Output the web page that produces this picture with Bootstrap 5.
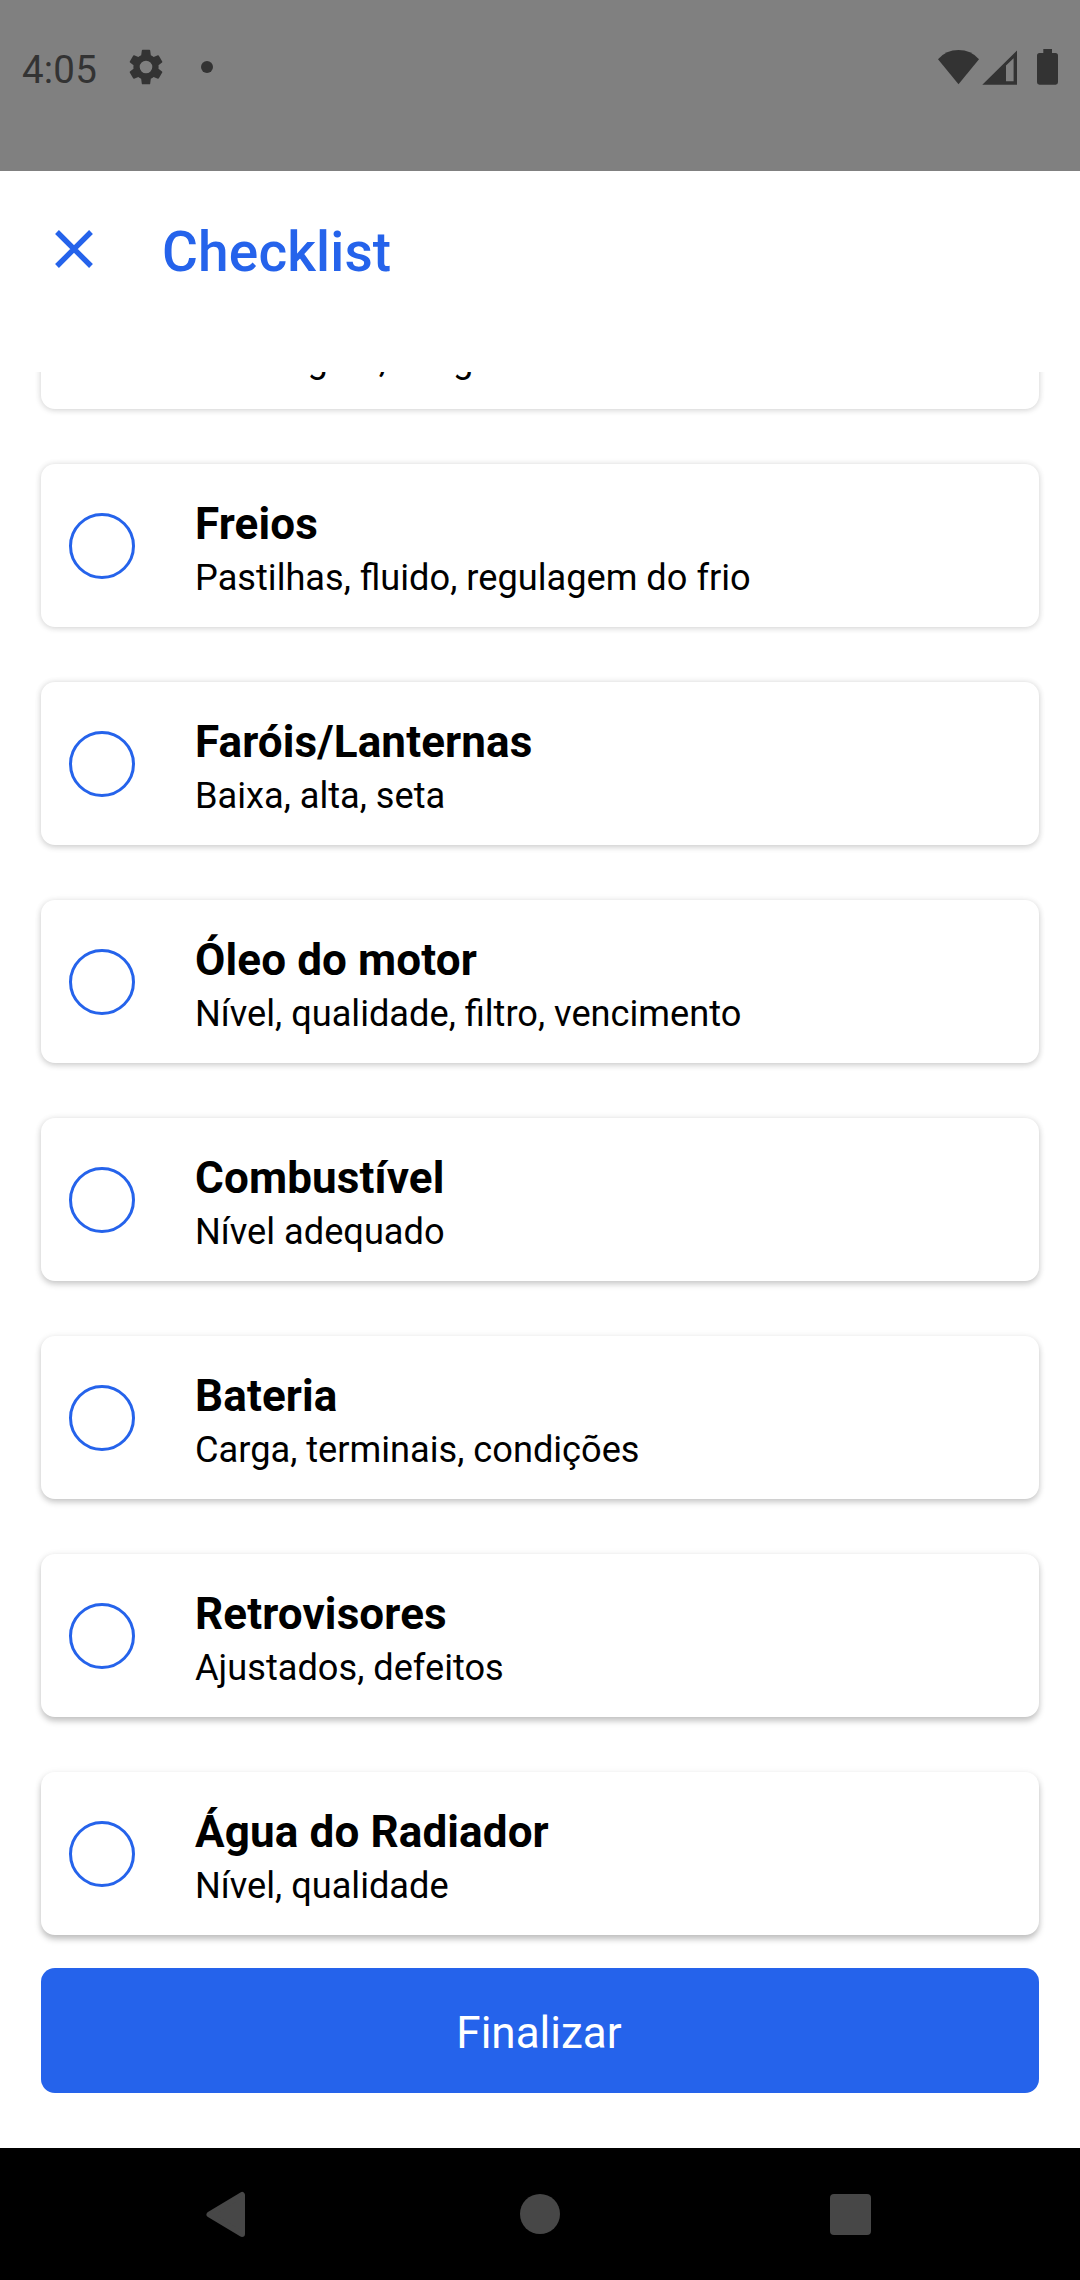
<!DOCTYPE html>
<html lang="pt-BR">
<head>
<meta charset="utf-8">
<meta name="viewport" content="width=device-width, initial-scale=1">
<title>Checklist</title>
<link href="https://cdn.jsdelivr.net/npm/bootstrap@5.3.0/dist/css/bootstrap.min.css" rel="stylesheet">
<style>
  :root { --brand: #2563eb; }
  body { font-family: Roboto, sans-serif; color: #000; background: #fff; }
  .screen { height: 2280px; width: 1080px; }
  .status-bar { height: 171px; background: #808080; color: #333; padding: 0 22px 0 22px; }
  .status-row { height: 134px; }
  .clock { font-size: 38.5px; line-height: 46px; width: 103px; padding-top: 5px; letter-spacing: .2px; }
  .sheet-head { height: 201px; padding: 49px 51px 0; color: var(--brand); }
  .btn-x { width: 46px; height: 58px; }
  .sheet-title { font-size: 55px; line-height: 64px; font-weight: 500; margin-left: 65px; letter-spacing: .15px; }
  .item-list { padding: 0 41px 33px; gap: 55px; }
  .item { height: 163px; border: 0; border-radius: 14px; padding: 0 28px; --lift: 1px; --tone: .17; color: #000;
          box-shadow: 0 var(--lift) 6px rgba(0,0,0,var(--tone)), 0 0 8px rgba(0,0,0,.04); }
  .item:nth-child(3) { --lift: 1.5px; --tone: .19; }
  .item:nth-child(4) { --lift: 2px; --tone: .2; }
  .item:nth-child(5) { --lift: 2.5px; --tone: .21; }
  .item:nth-child(6) { --lift: 3px; --tone: .22; }
  .item:nth-child(7) { --lift: 3.5px; --tone: .23; }
  .item:nth-child(8) { --lift: 4px; --tone: .25; }
  .item-scrolled { padding: 0 154px 28px; }
  .check { width: 66px; height: 66px; border: 3px solid var(--brand); background: none; margin: 0 60px 0 0; }
  .item-text { padding-top: 5px; }
  .item-name { font-size: 44px; line-height: 52px; font-weight: 700; margin: 0 0 7px; letter-spacing: .13px; }
  .item-note { font-size: 36.2px; line-height: 42px; margin: 0; }
  .btn-finish { height: 125px; margin: 0 41px 55px; border: 0; border-radius: 14px; padding: 4px 2px 0 0; font-size: 44px; line-height: 52px; color: #fff; background: var(--brand); }
  .nav-keys { height: 132px; background: #000; color: #474747; padding: 0 205px; }
</style>
</head>
<body>
<div class="screen d-flex flex-column overflow-hidden">
  <header class="status-bar flex-shrink-0">
    <div class="status-row d-flex align-items-center justify-content-between">
      <div class="d-flex align-items-center">
        <span class="clock">4:05</span>
        <svg width="42" height="42" viewBox="0 0 24 24" fill="currentColor"><path d="M19.14 12.94c.04-.3.06-.61.06-.94s-.02-.64-.07-.94l2.03-1.58a.49.49 0 0 0 .12-.61l-1.92-3.32a.49.49 0 0 0-.59-.22l-2.39.96a7 7 0 0 0-1.62-.94L14.4 2.5a.48.48 0 0 0-.48-.41h-3.84a.47.47 0 0 0-.47.41l-.36 2.85c-.59.24-1.13.57-1.62.94l-2.39-.96a.48.48 0 0 0-.59.22L2.74 8.87a.47.47 0 0 0 .12.61l2.03 1.58c-.05.3-.09.63-.09.94s.02.64.07.94l-2.03 1.58a.49.49 0 0 0-.12.61l1.92 3.32c.12.22.37.29.59.22l2.39-.96c.5.38 1.03.7 1.62.94l.36 2.85c.05.24.24.41.48.41h3.84c.24 0 .44-.17.47-.41l.36-2.85a6.6 6.6 0 0 0 1.62-.94l2.39.96c.22.08.47 0 .59-.22l1.92-3.32a.47.47 0 0 0-.12-.61zM12 15.6a3.6 3.6 0 1 1 0-7.2 3.6 3.6 0 0 1 0 7.2z"/></svg>
        <svg class="ms-4" width="30" height="42" viewBox="0 0 30 42" fill="currentColor"><circle cx="16" cy="21" r="6"/></svg>
      </div>
      <svg width="120" height="36" viewBox="938 49 120 36" fill="currentColor">
        <path d="M938 59.2Q946 50 958.5 50T979 59.2L958.5 84.2Z"/>
        <path fill-rule="evenodd" d="M982.3 84.7 1017 50.5V84.7ZM1006 65.5V81.3H1013.6V58.2Z"/>
        <path d="M1043.3 49h8.7v4h3.5q2.5 0 2.5 2.5V82.3q0 2.4-2.4 2.4H1039.4q-2.4 0-2.4-2.4V55.5q0-2.5 2.5-2.5h3.8z"/>
      </svg>
    </div>
  </header>

  <div class="sheet-head d-flex align-items-start flex-shrink-0">
    <button type="button" class="btn-x btn p-0 border-0 d-flex align-items-center justify-content-center" aria-label="Fechar">
      <svg width="46" height="46" viewBox="0 0 46 46" fill="none" stroke="#2563eb" stroke-width="5.4"><path d="M6 6 40 40M40 6 6 40"/></svg>
    </button>
    <h1 class="sheet-title mb-0">Checklist</h1>
  </div>

  <main class="item-list flex-grow-1 d-flex flex-column justify-content-end overflow-hidden">
    <div class="item item-scrolled card justify-content-end flex-shrink-0"><p class="item-note">Calibragem, desgate</p></div>
    <div class="item card flex-row align-items-center flex-shrink-0"><span class="check rounded-circle"></span><div class="item-text"><h2 class="item-name">Freios</h2><p class="item-note">Pastilhas, fluido, regulagem do frio</p></div></div>
    <div class="item card flex-row align-items-center flex-shrink-0"><span class="check rounded-circle"></span><div class="item-text"><h2 class="item-name">Faróis/Lanternas</h2><p class="item-note">Baixa, alta, seta</p></div></div>
    <div class="item card flex-row align-items-center flex-shrink-0"><span class="check rounded-circle"></span><div class="item-text"><h2 class="item-name">Óleo do motor</h2><p class="item-note">Nível, qualidade, filtro, vencimento</p></div></div>
    <div class="item card flex-row align-items-center flex-shrink-0"><span class="check rounded-circle"></span><div class="item-text"><h2 class="item-name">Combustível</h2><p class="item-note">Nível adequado</p></div></div>
    <div class="item card flex-row align-items-center flex-shrink-0"><span class="check rounded-circle"></span><div class="item-text"><h2 class="item-name">Bateria</h2><p class="item-note">Carga, terminais, condições</p></div></div>
    <div class="item card flex-row align-items-center flex-shrink-0"><span class="check rounded-circle"></span><div class="item-text"><h2 class="item-name">Retrovisores</h2><p class="item-note">Ajustados, defeitos</p></div></div>
    <div class="item card flex-row align-items-center flex-shrink-0"><span class="check rounded-circle"></span><div class="item-text"><h2 class="item-name">Água do Radiador</h2><p class="item-note">Nível, qualidade</p></div></div>
  </main>

  <button type="button" class="btn btn-primary btn-finish flex-shrink-0">Finalizar</button>

  <nav class="nav-keys d-flex align-items-center justify-content-between flex-shrink-0">
    <svg width="46" height="46" viewBox="0 0 46 46" fill="currentColor" stroke="currentColor" stroke-width="6" stroke-linejoin="round"><path d="M4.5 23.5 37 4V43Z"/></svg>
    <svg width="46" height="46" viewBox="0 0 46 46" fill="currentColor"><circle cx="23" cy="23" r="20"/></svg>
    <svg width="46" height="46" viewBox="0 0 46 46" fill="currentColor"><rect x="1" y="3" width="41" height="41" rx="4"/></svg>
  </nav>
</div>
<script src="https://cdn.jsdelivr.net/npm/bootstrap@5.3.0/dist/js/bootstrap.bundle.min.js"></script>
</body>
</html>
